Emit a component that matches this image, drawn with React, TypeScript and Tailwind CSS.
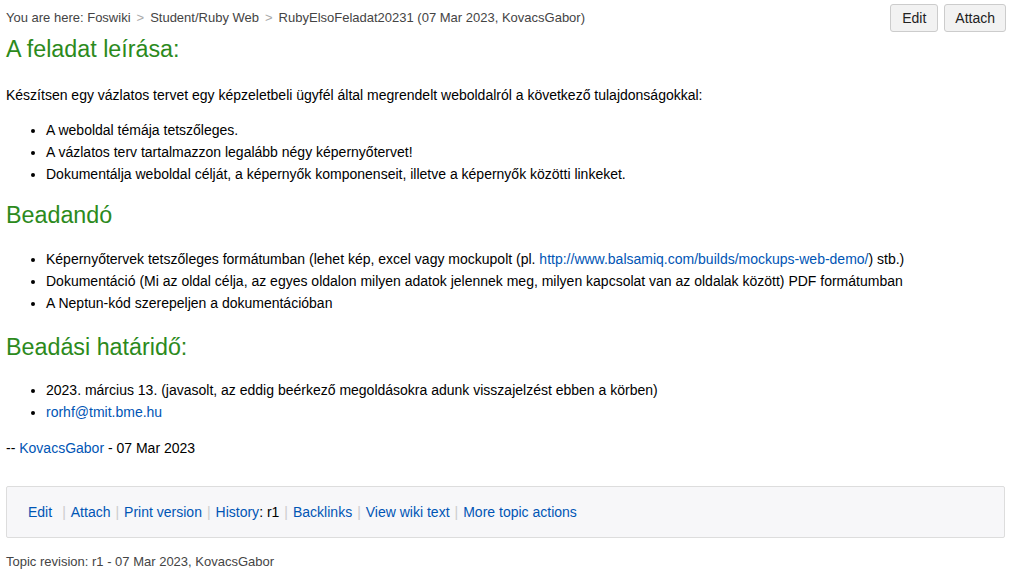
const link = "text-[#0055b5]";

function Sep() {
  return <span className="mx-[6px] text-[#aaa]">&gt;</span>;
}

function ActionSep() {
  return <span className="mx-[5px] text-[#ccc]">|</span>;
}

export default function App() {
  return (
    <div className="min-h-[574px] bg-white px-[6px] font-['Liberation_Sans',Arial,sans-serif] text-[14px] text-black">
      <div className="flex items-start justify-between pt-[4px]">
        <div className="pt-[4px] text-[13px] text-[#444]">
          You are here: Foswiki
          <Sep />
          Student/Ruby Web
          <Sep />
          RubyElsoFeladat20231 (07 Mar 2023, KovacsGabor)
        </div>
        <div className="flex gap-[6px] pr-[5px]">
          <button className="h-[28px] rounded-[3px] border border-[#ccc] bg-[#f2f2f2] px-[11px] text-[14px] text-[#222]">
            Edit
          </button>
          <button className="h-[28px] rounded-[3px] border border-[#ccc] bg-[#f2f2f2] px-[10px] text-[14px] text-[#222]">
            Attach
          </button>
        </div>
      </div>

      <h2 className="mt-[3px] text-[23.3px] leading-[28px] text-[#2c8a1c]">A feladat leírása:</h2>
      <p className="mt-[22px] leading-[20px]">
        Készítsen egy vázlatos tervet egy képzeletbeli ügyfél által megrendelt weboldalról a következő tulajdonságokkal:
      </p>
      <ul className="mt-[14px] list-disc pl-[40px] leading-[22px]">
        <li>A weboldal témája tetszőleges.</li>
        <li>A vázlatos terv tartalmazzon legalább négy képernyőtervet!</li>
        <li>Dokumentálja weboldal célját, a képernyők komponenseit, illetve a képernyők közötti linkeket.</li>
      </ul>

      <h2 className="mt-[16px] text-[23.3px] leading-[28px] text-[#2c8a1c]">Beadandó</h2>
      <ul className="mt-[19px] list-disc pl-[40px] leading-[22px]">
        <li>
          Képernyőtervek tetszőleges formátumban (lehet kép, excel vagy mockupolt (pl.{" "}
          <a className={link}>http://www.balsamiq.com/builds/mockups-web-demo/</a>) stb.)
        </li>
        <li>
          Dokumentáció (Mi az oldal célja, az egyes oldalon milyen adatok jelennek meg, milyen kapcsolat van az oldalak
          között) PDF formátumban
        </li>
        <li>A Neptun-kód szerepeljen a dokumentációban</li>
      </ul>

      <h2 className="mt-[19px] text-[23.3px] leading-[28px] text-[#2c8a1c]">Beadási határidő:</h2>
      <ul className="mt-[18px] list-disc pl-[40px] leading-[22px]">
        <li>2023. március 13. (javasolt, az eddig beérkező megoldásokra adunk visszajelzést ebben a körben)</li>
        <li>
          <a className={link}>rorhf@tmit.bme.hu</a>
        </li>
      </ul>
      <p className="mt-[14px] leading-[22px]">
        -- <a className={link}>KovacsGabor</a> - 07 Mar 2023
      </p>

      <div className="mr-[6px] mt-[27px] flex h-[52px] items-center rounded-[2px] border border-[#ddd] bg-[#f7f7f9] px-[21px] text-[14px]">
        <a className={link}>Edit</a>
        <span className="ml-[10px] mr-[5px] text-[#ccc]">|</span>
        <a className={link}>Attach</a>
        <ActionSep />
        <a className={link}>Print version</a>
        <ActionSep />
        <a className={link}>History</a>: r1
        <ActionSep />
        <a className={link}>Backlinks</a>
        <ActionSep />
        <a className={link}>View wiki text</a>
        <ActionSep />
        <a className={link}>More topic actions</a>
      </div>

      <div className="mt-[14px] text-[13px] text-[#444]">Topic revision: r1 - 07 Mar 2023, KovacsGabor</div>
    </div>
  );
}
